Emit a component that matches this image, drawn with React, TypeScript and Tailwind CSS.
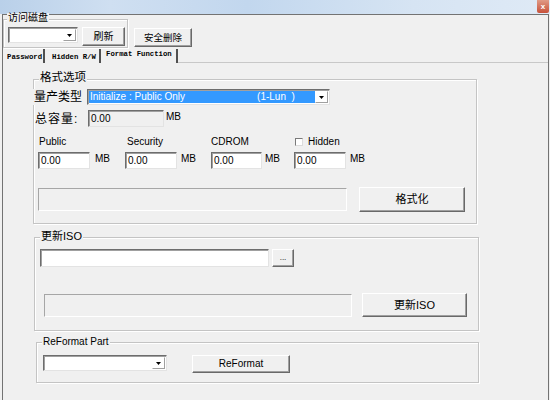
import React from "react";

const sunkenEdge =
  "border border-t-[#6d6d6d] border-l-[#6d6d6d] border-r-[#e3e3e3] border-b-[#e3e3e3] shadow-[inset_1px_1px_0_#a0a0a0]";
const sunken = `bg-white ${sunkenEdge}`;
const raised =
  "bg-[#f0f0f0] border border-t-white border-l-white border-r-[#696969] border-b-[#696969] shadow-[inset_-1px_-1px_0_#a0a0a0]";
const etched =
  "border border-t-[#a6a6a6] border-l-[#a6a6a6] border-r-white border-b-white bg-[#f0f0f0]";

const Button = ({
  className = "",
  children,
}: {
  className?: string;
  children: React.ReactNode;
}) => (
  <button
    className={`${raised} flex items-center justify-center text-black leading-none ${className}`}
  >
    {children}
  </button>
);

const Arrow = () => (
  <div className="w-[13px] bg-white flex items-center justify-center border border-t-white border-l-white border-r-[#a0a0a0] border-b-[#a0a0a0]">
    <svg width="5" height="3" viewBox="0 0 5 3">
      <path d="M0 0h5L2.5 3z" fill="#000" />
    </svg>
  </div>
);

const Combo = ({ className = "" }: { className?: string }) => (
  <div className={`${sunken} flex justify-end p-[1px] ${className}`}>
    <Arrow />
  </div>
);

const GroupBox = ({
  label,
  labelClass = "",
  className = "",
  children,
}: {
  label: string;
  labelClass?: string;
  className?: string;
  children: React.ReactNode;
}) => (
  <div
    className={`relative border border-[#c4c4c4] shadow-[inset_1px_1px_0_#fff,1px_1px_0_#fff] ${className}`}
  >
    <span
      className={`absolute bg-[#f0f0f0] px-[1px] leading-none whitespace-nowrap ${labelClass}`}
    >
      {label}
    </span>
    {children}
  </div>
);

const Field = ({ className = "", value = "0.00", disabled = false }) => (
  <div
    className={`${disabled ? "bg-[#f0f0f0]" : "bg-white"} ${sunkenEdge} flex items-center pl-[2px] text-[10px] leading-none ${className}`}
  >
    {value}
  </div>
);

const Mb = ({ className = "" }: { className?: string }) => (
  <span className={`text-[10px] leading-none ${className}`}>MB</span>
);

export default function App() {
  return (
    <div className="w-[550px] h-[400px] bg-[#f0f0f0] overflow-hidden text-black font-['Liberation_Sans','Noto_Sans_CJK_SC',sans-serif]">
      {/* title bar */}
      <div className="h-[14px] flex justify-end bg-[linear-gradient(90deg,#b9d0e9_0%,#cfdff1_20%,#c2d7ee_45%,#d6e4f3_75%,#dfeaf6_100%)]">
        <div className="w-[12px] h-[13px] mr-[1px] rounded-b-[2px] bg-[linear-gradient(180deg,#e09a86,#c7513a)] flex items-center justify-center text-white text-[8px] leading-none font-bold">
          x
        </div>
      </div>

      {/* window body */}
      <div className="ml-[2px] w-[547px] h-[386px] border-x border-t border-[#737373] flex flex-col">
        {/* disk row */}
        <div className="flex h-[34px] items-start">
          <GroupBox
            label="访问磁盘"
            labelClass="text-[10px] left-[3px] top-[-7px]"
            className="mt-[4px] w-[125px] h-[29px]"
          >
            <div className="flex pt-[7px] pl-[4px]">
              <Combo className="w-[70px] h-[16px]" />
              <Button className="ml-[4px] w-[43px] h-[19px] text-[10px]">
                刷新
              </Button>
            </div>
          </GroupBox>
          <Button className="ml-[6px] mt-[13px] w-[58px] h-[19px] text-[9.5px]">
            安全删除
          </Button>
        </div>

        {/* tabs */}
        <div className="flex h-[14px] font-['Liberation_Mono',monospace] text-[7.3px] font-bold leading-none">
          <span className="w-[42px] pl-[4px] pt-[5px] border-r-2 border-[#505050]">
            Password
          </span>
          <span className="w-[56px] pl-[7px] pt-[5px] border-r-2 border-[#505050]">
            Hidden R/W
          </span>
          <span className="w-[77px] pl-[5px] pt-[2px] border-r-2 border-[#505050]">
            Format Function
          </span>
          <div className="flex-1 border-b border-[#c8c8c8]" />
        </div>

        {/* tab panel */}
        <div className="flex flex-col">
          {/* 格式选项 */}
          <GroupBox
            label="格式选项"
            labelClass="text-[11.5px] left-[5px] top-[-8px]"
            className="ml-[30px] mt-[16px] w-[444px] h-[145px]"
          >
            <div className="flex items-center mt-[9px]">
              <span className="w-[54px] h-[16px] bg-[#f0f0f0] -ml-[1px] pl-[1px] text-[12px] leading-[16px]">
                量产类型
              </span>
              <div className={`${sunken} w-[243px] h-[16px] flex p-[1px]`}>
                <div className="flex-1 bg-[#3399ff] text-white text-[10px] leading-[12px] flex pl-[1px]">
                  <span>Initialize : Public Only</span>
                  <span className="ml-[72px]">(1-Lun&nbsp;&nbsp;)</span>
                </div>
                <Arrow />
              </div>
            </div>

            <div className="flex items-center mt-[5px]">
              <span className="w-[54px] pl-[1px] text-[12px] tracking-[1px] leading-none">
                总容量:
              </span>
              <Field disabled className="w-[76px] h-[17px]" />
              <Mb className="ml-[2px] -mt-[3px]" />
            </div>

            <div className="grid grid-cols-[87px_85px_84px_1fr] pl-[4px] mt-[9px] text-[10px] leading-[11px]">
              <span className="pl-[1px]">Public</span>
              <span className="pl-[2px]">Security</span>
              <span className="pl-[1px]">CDROM</span>
              <span className="flex items-center pl-[1px]">
                <span className="w-[8px] h-[8px] bg-white border border-t-[#7a7a7a] border-l-[#7a7a7a] border-r-[#dcdcdc] border-b-[#dcdcdc]" />
                <span className="ml-[5px]">Hidden</span>
              </span>
            </div>

            <div className="grid grid-cols-[87px_85px_84px_1fr] pl-[4px] mt-[5px]">
              <div className="flex items-start">
                <Field className="w-[52px] h-[17px]" />
                <Mb className="ml-[5px] mt-[2px]" />
              </div>
              <div className="flex items-start">
                <Field className="w-[52px] h-[17px]" />
                <Mb className="ml-[4px] mt-[2px]" />
              </div>
              <div className="flex items-start">
                <Field className="ml-[1px] w-[51px] h-[17px]" />
                <Mb className="ml-[3px] mt-[2px]" />
              </div>
              <div className="flex items-start">
                <Field className="w-[52px] h-[17px]" />
                <Mb className="ml-[4px] mt-[2px]" />
              </div>
            </div>

            <div className="flex items-center pl-[4px] mt-[18px]">
              <div className={`${etched} w-[309px] h-[23px]`} />
              <Button className="ml-[12px] w-[106px] h-[25px] text-[11px]">
                格式化
              </Button>
            </div>
          </GroupBox>

          {/* 更新ISO */}
          <GroupBox
            label="更新ISO"
            labelClass="text-[11px] left-[5px] top-[-7px]"
            className="ml-[31px] mt-[13px] w-[445px] h-[94px]"
          >
            <div className="flex pl-[5px] mt-[11px]">
              <div className={`${sunken} w-[229px] h-[18px]`} />
              <Button className="ml-[3px] w-[22px] h-[18px] text-[8px] text-[#606060]">
                ...
              </Button>
            </div>
            <div className="flex items-center pl-[9px] mt-[26px]">
              <div className={`${etched} w-[308px] h-[23px]`} />
              <Button className="ml-[10px] w-[105px] h-[24px] text-[11px]">
                更新ISO
              </Button>
            </div>
          </GroupBox>

          {/* ReFormat Part */}
          <GroupBox
            label="ReFormat Part"
            labelClass="text-[10px] left-[5px] top-[-6px]"
            className="ml-[33px] mt-[11px] w-[443px] h-[41px]"
          >
            <div className="flex items-start pl-[6px] mt-[12px]">
              <Combo className="w-[124px] h-[16px]" />
              <Button className="ml-[25px] w-[98px] h-[18px] text-[10px]">
                ReFormat
              </Button>
            </div>
          </GroupBox>
        </div>
      </div>
    </div>
  );
}
